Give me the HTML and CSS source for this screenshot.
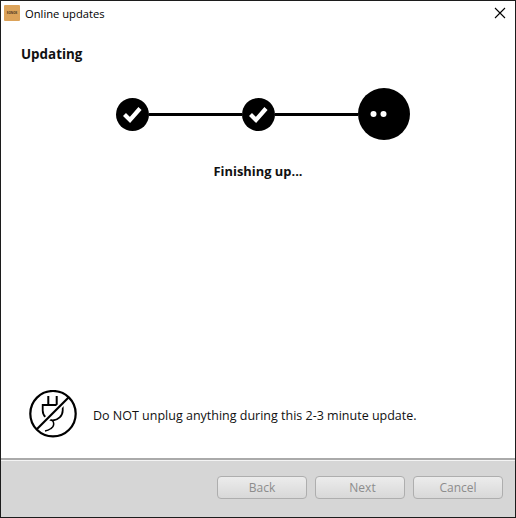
FILE: index.html
```html
<!DOCTYPE html>
<html lang="en">
<head>
<meta charset="utf-8">
<title>Online updates</title>
<link rel="stylesheet" href="styles.css">
</head>
<body>
<div class="window">
  <header class="titlebar">
    <div class="app-icon"><span class="app-logo">SONOS</span></div>
    <span class="title">Online updates</span>
    <svg class="close" width="12" height="12" viewBox="0 0 12 12"><path d="M1 1L11 11M11 1L1 11" stroke="#000" stroke-width="1.1" fill="none"/></svg>
  </header>
  <main class="content">
    <h1 class="heading">Updating</h1>
    <div class="stepper">
      <div class="step">
        <svg width="33" height="33" viewBox="0 0 33 33"><circle cx="16.5" cy="16.5" r="16.5" fill="#000"/><path d="M8.500 16.500L14 22L24 10.500" stroke="#fff" stroke-width="4.200" fill="none"/></svg>
      </div>
      <div class="connector"></div>
      <div class="step">
        <svg width="33" height="33" viewBox="0 0 33 33"><circle cx="16.5" cy="16.5" r="16.5" fill="#000"/><path d="M8.500 16.500L14 22L24 10.500" stroke="#fff" stroke-width="4.200" fill="none"/></svg>
      </div>
      <div class="connector connector-short"></div>
      <div class="step">
        <svg width="52" height="52" viewBox="0 0 52 52"><circle cx="26" cy="26" r="26" fill="#000"/><circle cx="15.500" cy="26" r="3" fill="#fff"/><circle cx="25.500" cy="26" r="3" fill="#fff"/></svg>
      </div>
    </div>
    <p class="status">Finishing up...</p>
    <div class="notice">
      <svg class="plug" width="48" height="48" viewBox="0 0 48 48" fill="none" stroke="#000">
        <path d="M19.300 6V14M27.700 6V14" stroke-width="2"/>
        <path d="M13.700 15H33.700V20.500C33.700 26 29 30 23.700 30.500C18.400 30 13.700 26 13.700 20.500Z" stroke-width="1.800"/>
        <path d="M23.700 30.500C25 33 26 36 22 38.500C20 40 18 40.800 16 41" stroke-width="1.500"/>
        <path d="M9 38L39 8" stroke="#fff" stroke-width="5.500"/>
        <path d="M8 39L40 7" stroke-width="2.200"/>
        <circle cx="24" cy="23.700" r="22.700" stroke-width="2.200"/>
      </svg>
      <p class="notice-text">Do NOT unplug anything during this 2-3 minute update.</p>
    </div>
  </main>
  <footer class="footer">
    <button class="btn" disabled>Back</button>
    <button class="btn btn-next" disabled>Next</button>
    <button class="btn" disabled>Cancel</button>
  </footer>
</div>
</body>
</html>
```
FILE: styles.css
```css
* { box-sizing: border-box; }
html, body { margin: 0; padding: 0; }
body {
  width: 516px;
  height: 518px;
  background: #fff;
  font-family: "Open Sans", "Noto Sans", sans-serif;
  overflow: hidden;
}
.window {
  width: 516px;
  height: 518px;
  border: 1px solid #1c1c1c;
  display: flex;
  flex-direction: column;
  background: #fff;
}
.titlebar {
  height: 27px;
  display: flex;
  align-items: center;
  padding: 0 9px 3px 3px;
  flex: none;
}
.app-icon {
  width: 16px;
  height: 16px;
  background: #dca35a;
  border-radius: 1px;
  display: flex;
  align-items: center;
  justify-content: center;
  overflow: hidden;
}
.app-logo {
  font-size: 3px;
  font-weight: 700;
  color: #4a3420;
  letter-spacing: 0;
  line-height: 1;
}
.title {
  margin-left: 5px;
  font-size: 11.2px;
  color: #000;
  flex: 1;
}
.close { flex: none; }
.content {
  flex: 1;
  display: flex;
  flex-direction: column;
  min-height: 0;
}
.heading {
  margin: 16px 0 0 20px;
  font-size: 13.4px;
  line-height: 20px;
  font-weight: 700;
  color: #111;
}
.stepper {
  margin: 24px 0 0 115px;
  display: flex;
  align-items: center;
  height: 52px;
}
.step { display: flex; flex: none; }
.step svg { display: block; }
.connector { width: 93px; height: 3px; background: #000; flex: none; }
.connector-short { width: 83px; }
.status {
  margin: 23px 0 0;
  text-align: center;
  font-size: 12.9px;
  line-height: 16px;
  font-weight: 700;
  color: #111;
}
.notice {
  margin-top: auto;
  margin-bottom: 20px;
  margin-left: 28px;
  display: flex;
  align-items: center;
}
.plug { flex: none; display: block; }
.notice-text {
  margin: 2px 0 0 16px;
  font-size: 12.5px;
  color: #111;
}
.footer {
  height: 59px;
  flex: none;
  background: #d6d6d6;
  border-top: 2px solid #aaa;
  box-shadow: inset 0 1px 0 #f4f4f4;
  display: flex;
  justify-content: flex-end;
  align-items: flex-start;
  gap: 8px;
  padding: 16px 12px 0 0;
}
.btn {
  width: 90px;
  height: 23px;
  border: 1px solid #aeaeae;
  border-radius: 4px;
  background: linear-gradient(#ececec, #d8d8d8);
  color: #8c8c8c;
  font-family: inherit;
  font-size: 12px;
  padding: 0;
  line-height: 20px;
}
.btn-next { padding-left: 5px; }
```
